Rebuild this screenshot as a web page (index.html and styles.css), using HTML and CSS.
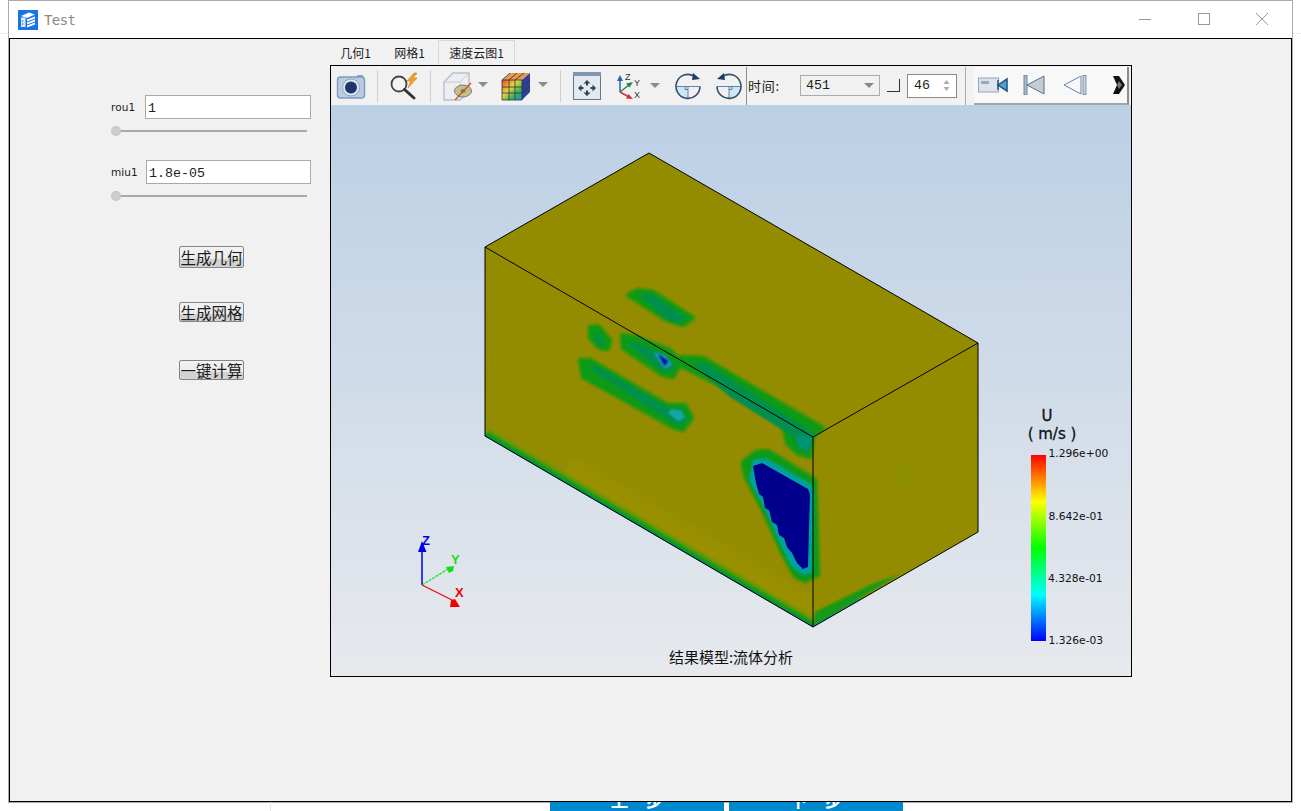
FILE: index.html
```html
<!DOCTYPE html>
<html lang="zh">
<head>
<meta charset="utf-8">
<title>Test</title>
<link rel="stylesheet" href="styles.css">
</head>
<body>
<div class="window">
  <header class="titlebar">
    <svg class="app-icon" viewBox="0 0 20 20"><rect width="20" height="20" fill="#1a73e8"/><path d="M3 6 L11 2.5 L17 4.5 L9 8Z" fill="#fff"/><path d="M3 7.5 H7.5 V17 H3Z" fill="#dfeafb"/><circle cx="4.6" cy="11" r=".8" fill="#1a73e8"/><circle cx="4.6" cy="14" r=".8" fill="#1a73e8"/><path d="M9 9.5 L17 6.5 V8.5 L9 11.5Z M9 12.5 L17 9.5 V11.5 L9 14.5Z M9 15.5 L17 12.5 V14.5 L9 17.5Z" fill="#fff"/></svg>
    <span class="app-title">Test</span>
    <div class="win-controls">
      <svg class="win-btn" viewBox="0 0 12 12"><path d="M0 6.5H12" stroke="#999" fill="none"/></svg>
      <svg class="win-btn" viewBox="0 0 12 12"><rect x=".5" y=".5" width="11" height="11" stroke="#999" fill="none"/></svg>
      <svg class="win-btn" viewBox="0 0 12 12"><path d="M0 0L12 12M12 0L0 12" stroke="#999" fill="none"/></svg>
    </div>
  </header>
  <main class="frame">
    <aside class="form">
      <div class="field">
        <label class="field-label">rou1</label>
        <input class="field-input" value="1">
      </div>
      <div class="slider"><span class="slider-handle"></span><span class="slider-track"></span></div>
      <div class="field field-second">
        <label class="field-label field-label-wide">miu1</label>
        <input class="field-input" value="1.8e-05">
      </div>
      <div class="slider"><span class="slider-handle"></span><span class="slider-track"></span></div>
      <div class="actions">
        <button class="action action-tall">生成几何</button>
        <button class="action">生成网格</button>
        <button class="action action-last">一键计算</button>
      </div>
    </aside>
    <section class="pane">
      <nav class="tabs">
        <span class="tab">几何1</span>
        <span class="tab">网格1</span>
        <span class="tab tab-active">速度云图1</span>
      </nav>
      <div class="viewer">
        <div class="toolbar">
          <svg class="tool w30" viewBox="0 0 30 30"><path d="M20 6l1.500-2h5l1 2z" fill="#8aa3c2"/><rect x="1.500" y="6" width="27" height="21" rx="3" fill="#b9cbe0" stroke="#7f9abb" stroke-width="1.400"/><circle cx="15" cy="16.500" r="8.500" fill="#dbe6f2" stroke="#8ea6c4"/><circle cx="15" cy="16.500" r="6" fill="#1c3768"/></svg>
          <span class="sep"></span>
          <svg class="tool w30 tool-lens" viewBox="0 0 30 30"><path d="M24 2l-7 8h4l-3 7 9-10h-4l4-5z" fill="#f0a12a" stroke="#c87c10" stroke-width=".6"/><circle cx="9" cy="13" r="7.500" fill="#f4f4f4" stroke="#444" stroke-width="1.800"/><path d="M14.500 18.500L24 27" stroke="#333" stroke-width="3" stroke-linecap="round"/></svg>
          <span class="sep"></span>
          <div class="tool-group">
            <svg class="tool w48" viewBox="0 0 48 30"><path d="M2 11L11 2H27V20L18 29H2Z" fill="#eceef1" stroke="#b4bfcc" stroke-width="1.400"/><path d="M2 11H18V29M18 11L27 2" fill="none" stroke="#c4ccd6"/><ellipse cx="21" cy="20" rx="8.500" ry="6" fill="#c9bf7c" stroke="#6f7f99"/><ellipse cx="21" cy="20" rx="2.500" ry="2" fill="#5d7ba8"/><path d="M13 29L29 12" stroke="#d2512a" stroke-width="1.300"/><path d="M36 11H46L41 16Z" fill="#8c8c8c"/></svg>
            <svg class="tool w48" viewBox="0 0 48 30"><path d="M1 9L9 2H29L21 9Z" fill="#e8964a"/><path d="M21 9L29 2V21L21 29Z" fill="#2c3f9a"/><rect x="1" y="9" width="20" height="20" fill="url(#rainbow)"/><path d="M1 9H21V29H1ZM8 9V29M14 9V29M1 16H21M1 22H21M21 16L29 9M21 22L29 15M9 2L1 9M16 2L8 9M23 2L14 9" fill="none" stroke="#2c3340" stroke-width=".8"/><path d="M37 11H47L42 16Z" fill="#8c8c8c"/><defs><linearGradient id="rainbow" x1="0" y1="0" x2="1" y2="1"><stop offset="0" stop-color="#e8452a"/><stop offset=".4" stop-color="#e8d43a"/><stop offset=".7" stop-color="#35b65a"/><stop offset="1" stop-color="#2a7bd0"/></linearGradient></defs></svg>
          </div>
          <span class="sep"></span>
          <div class="tool-group tool-group-wide">
            <svg class="tool w30 tool-fit" viewBox="0 0 30 30"><rect x="1.500" y="1.500" width="27" height="27" fill="#e4e9f0" stroke="#5f7896"/><rect x="1" y="1" width="28" height="4" fill="#7f95b0"/><path d="M15 9l-3.500 3.500h2.500v2h2v-2h2.500zM15 25l3.500-3.500h-2.500v-2h-2v2h-2.500zM6 17l3.500 3.500v-2.500h2v-2h-2v-2.500zM24 17l-3.500-3.500v2.500h-2v2h2v2.500z" fill="#2e4258"/></svg>
            <svg class="tool w45" viewBox="0 0 45 30"><path d="M4 21V8" stroke="#2a62b8" stroke-width="1.500"/><path d="M4 4L1 10H7Z" fill="#2a62b8"/><path d="M4 21L13 14" stroke="#1f8a4a" stroke-width="1.500"/><path d="M17 11L10 12.500L13.500 16.500Z" fill="#1f8a4a"/><path d="M4 21L13 26" stroke="#d23030" stroke-width="1.500"/><path d="M17 28L10 27.500L12.500 23Z" fill="#d23030"/><text class="axis-tiny" x="9" y="9">Z</text><text class="axis-tiny" x="18" y="15">Y</text><text class="axis-tiny" x="18" y="27">X</text><path d="M34 12H44L39 17Z" fill="#8c8c8c"/></svg>
            <svg class="tool w28" viewBox="0 0 28 30"><path d="M14 15.500H2A12 12 0 0 0 14 27.500Z" fill="#cfe6f6"/><path d="M2 15.500H26M14 15.500V27.500M11 15.500V18.500H14" stroke="#3c6a96" fill="none" stroke-width=".8"/><path d="M20 5A12 12 0 1 0 26 15.500" fill="none" stroke="#33506e" stroke-width="1.600"/><path d="M19 2L26 8L18 9Z" fill="#1e3d66"/></svg>
            <svg class="tool w28" viewBox="0 0 28 30"><path d="M14 15.500H26A12 12 0 0 1 14 27.500Z" fill="#cfe6f6"/><path d="M2 15.500H26M14 15.500V27.500M17 15.500V18.500H14" stroke="#3c6a96" fill="none" stroke-width=".8"/><path d="M8 5A12 12 0 1 1 2 15.500" fill="none" stroke="#33506e" stroke-width="1.600"/><path d="M9 2L2 8L10 9Z" fill="#1e3d66"/></svg>
          </div>
          <span class="handle"></span>
          <span class="time-label">时间:</span>
          <div class="combo"><span>451</span><svg class="combo-arrow" viewBox="0 0 10 5"><path d="M0 0H10L5 5Z" fill="#888"/></svg></div>
          <span class="check"></span>
          <div class="spin"><span>46</span><svg class="spin-arrows" viewBox="0 0 7 11"><path d="M3.500 0L6.500 4H.5ZM3.500 11L.5 7H6.500Z" fill="#aaa"/></svg></div>
          <span class="sep sep-player"></span>
          <div class="player">
            <svg class="tool w30" viewBox="0 0 30 16"><rect x=".5" y="1" width="20" height="14" fill="#dde3ea" stroke="#93a6ba"/><rect x="3" y="4" width="8" height="3" fill="#97a8ba"/><path d="M20 8L29 2V14Z" fill="#46a8cc" stroke="#23507e" stroke-width="1.500"/><path d="M20 3V13" stroke="#23507e" stroke-width="1.500"/></svg>
            <svg class="tool w22" viewBox="0 0 22 20"><rect x="1" y="0" width="3" height="20" fill="#aebccc" stroke="#55708f" stroke-width=".8"/><path d="M21 1V19L4 10Z" fill="#c4ccd6" stroke="#55708f"/></svg>
            <svg class="tool w24" viewBox="0 0 24 20"><path d="M18 1V19L1 10Z" fill="#f6f7f9" stroke="#6a84a2"/><rect x="20" y="0.500" width="3" height="19" fill="#c6d0dc" stroke="#6a84a2" stroke-width=".8"/></svg>
            <svg class="tool w12" viewBox="0 0 12 18"><path d="M0 0H6L12 9L6 18H0L4 9Z" fill="#111"/><path d="M4 9L6 5L9 9L6 13Z" fill="#777"/></svg>
          </div>
        </div>
        <div class="canvas">
          <svg class="scene" viewBox="331 105 800 571" xmlns="http://www.w3.org/2000/svg">
            <defs>
              <filter id="blur1" x="-20%" y="-20%" width="140%" height="140%"><feGaussianBlur stdDeviation="1"/></filter>
              <filter id="blur2" x="-20%" y="-20%" width="140%" height="140%"><feGaussianBlur stdDeviation="1.600"/></filter>
              <filter id="blur6" x="-30%" y="-30%" width="160%" height="160%"><feGaussianBlur stdDeviation="5"/></filter>
              <clipPath id="clip-box"><path d="M649 153L978 343V532L813 627L485 436V247Z"/></clipPath>
              <clipPath id="clip-left"><path d="M485 247L813 437V627L485 436Z"/></clipPath>
              <clipPath id="clip-right"><path d="M813 437L978 343V532L813 627Z"/></clipPath>
              <linearGradient id="legend" x1="0" y1="0" x2="0" y2="1">
                <stop offset="0" stop-color="#f00"/><stop offset=".25" stop-color="#ff0"/><stop offset=".5" stop-color="#0f0"/><stop offset=".75" stop-color="#0ff"/><stop offset="1" stop-color="#00f"/>
              </linearGradient>
            </defs>
            <path d="M649 153L978 343V532L813 627L485 436V247Z" fill="#948c00"/>
            <g clip-path="url(#clip-left)">
              <path d="M560 480L813 627" stroke="#9a9000" stroke-width="50" fill="none" filter="url(#blur6)"/>
              <path d="M485 436L813 627" stroke="#5c9a08" stroke-width="16" fill="none" filter="url(#blur2)"/>
              <path d="M485 436L813 627" stroke="#0b9a18" stroke-width="9" fill="none" filter="url(#blur1)"/>
              <path d="M485 436L813 627" stroke="#008a70" stroke-width="3" fill="none"/>
            </g>
            <g clip-path="url(#clip-right)">
              <path d="M813 627L900 574L872 584L815 612Z" fill="#179a14" filter="url(#blur1)"/>
              <path d="M813 627L860 600" stroke="#00907a" stroke-width="3" filter="url(#blur1)"/>
              <ellipse cx="905" cy="476" rx="9" ry="12" fill="#8d8f02" filter="url(#blur2)"/>
            </g>
            <g clip-path="url(#clip-box)">
              <g fill="#0e9a12" stroke="#0e9a12" stroke-width="4" stroke-linejoin="round" filter="url(#blur2)">
                <path d="M628 295L638 290L653 292L693 318L683 325L667 320Z"/>
                <path d="M590 327L598 326L610 340L608 349L600 348L590 338Z"/>
                <path d="M622 335L636 337L670 350L681 363L673 377L663 375L623 348Z"/>
                <path d="M580 360L590 360L667 405L685 405L692 418L683 430L673 427L583 377Z"/>
                <path d="M680 357L703 358L823 428L813 436L810 457L797 453L787 443L783 423L730 390L683 367Z"/>
                <path d="M756 452L768 451L815 480L818 575L805 581L795 576L782 552L763 510L745 475L743 462Z"/>
              </g>
              <g fill="#008f50" stroke="#008f50" stroke-width="2" stroke-linejoin="round" filter="url(#blur1)">
                <path d="M642 295L652 296L685 318L678 322L665 317Z"/>
                <path d="M597 333L603 342L600 345L596 340Z"/>
                <path d="M629 343L640 345L668 358L674 366L668 371L662 370Z"/>
                <path d="M590 367L596 367L670 410L682 410L686 418L680 424L673 422Z"/>
                <path d="M695 364L705 364L812 433L808 450L800 448L794 436L730 396Z"/>
              </g>
              <g filter="url(#blur1)">
                <path d="M653 352L665 355L672 364L665 369Z" fill="#1f9ac8"/>
                <path d="M672 409L682 411L685 418L678 421L668 413Z" fill="#15a6a8"/>
                <path d="M796 436L812 437L808 451L798 446Z" fill="#00957a"/>
                <path d="M753 460L766 458L811 484L814 492L812 573L802 575L791 566L779 542L766 512L749 480Z" fill="#06a0a0"/>
              </g>
              <path d="M658 354L668 361L665 366Z" fill="#00008c" filter="url(#blur1)"/>
              <path d="M753 466L762 463L808 489L810 494L808 567L803 569L797 563L792 553L787 547L784 538L779 535L777 525L772 522L769 510L765 508L763 497L759 494L756 483Z" fill="#00008c"/>
            </g>
            <path d="M649 153L978 343V532L813 627L485 436V247ZM485 247L813 437L978 343M813 437V627" fill="none" stroke="#000" stroke-width="1"/>

            <path d="M422 585V548" stroke="#0000f0" stroke-width="1.500"/>
            <path d="M422 541L418 552H426.500Z" fill="#0000f0"/>
            <path d="M422 585L448 569" stroke="#12e012" stroke-width="1.200" stroke-dasharray="3 1"/>
            <path d="M454 566L446 567L449 573L453 571Z" fill="#12e012"/>
            <path d="M422 585L452 600" stroke="#f00000" stroke-width="1.200"/>
            <path d="M460 607L450 607L451 600L455 599Z" fill="#f00000"/>
            <text class="axis-label axis-z" x="422" y="545">Z</text>
            <text class="axis-label axis-y" x="451" y="564">Y</text>
            <text class="axis-label axis-x" x="455" y="597">X</text>

            <text class="legend-title" x="1047" y="421">U</text>
            <text class="legend-title" x="1052" y="439">( m/s )</text>
            <rect x="1031" y="455" width="15" height="186" fill="url(#legend)"/>
            <text class="legend-value" x="1048.500" y="456.500">1.296e+00</text>
            <text class="legend-value" x="1048.500" y="519.500">8.642e-01</text>
            <text class="legend-value" x="1048" y="581.500">4.328e-01</text>
            <text class="legend-value" x="1048.500" y="643.500">1.326e-03</text>
            <text class="caption" x="731" y="663">结果模型:流体分析</text>
          </svg>
        </div>
      </div>
    </section>
  </main>
</div>
<footer class="strip">
  <span class="strip-rule"></span>
  <button class="step"><span>上一步</span></button>
  <button class="step"><span>下一步</span></button>
</footer>
</body>
</html>
```
FILE: styles.css
```css
* { box-sizing: border-box; }
html, body { margin: 0; height: 811px; overflow: hidden; }
body {
  width: 1301px;
  background: linear-gradient(#fff 33px, #eee 33px, #eee 34px, #fff 34px);
  font-family: "Noto Sans CJK SC", "Liberation Sans", sans-serif;
  color: #1c1c1c;
}
.window {
  margin-left: 8px;
  width: 1285px;
  height: 803px;
  border: 1px solid #ababab;
  background: #fff;
  display: flex;
  flex-direction: column;
}
.titlebar {
  height: 37px;
  flex: none;
  display: flex;
  align-items: center;
  padding-left: 9px;
}
.app-icon { width: 20px; height: 20px; margin-top: 1px; }
.app-title {
  margin-left: 6px;
  font: 14px "DejaVu Sans Mono", monospace;
  letter-spacing: -.6px;
  color: #8a8a8a;
  margin-top: 1px;
}
.win-controls {
  margin-left: auto;
  margin-right: 24px;
  display: flex;
  gap: 46.500px;
  margin-top: -1px;
}
.win-btn { width: 12px; height: 12px; }
.frame {
  flex: 1;
  border: 1px solid #000;
  background: #f1f1f1;
  display: flex;
}
.form {
  width: 320px;
  flex: none;
  padding: 56px 0 0 101px;
}
.field { display: flex; align-items: center; height: 24px; }
.field-second { margin-top: 24px; }
.field-label {
  width: 34px;
  font: 10.500px "DejaVu Sans", sans-serif;
  letter-spacing: .1px;
}
.field-label-wide { width: 35px; }
.field-input {
  flex: none;
  height: 24px;
  margin: 0;
  padding: 3px 2px 1px;
  width: 166px;
  border: 1px solid #a9a9a9;
  border-radius: 0;
  background: #fff;
  outline: none;
  font: 13.300px "Liberation Mono", monospace;
  color: #1c1c1c;
}
.field-second .field-input { width: 165px; }
.slider {
  display: flex;
  align-items: center;
  width: 196px;
  height: 10px;
  margin-top: 7px;
}
.slider-handle {
  width: 10px;
  height: 10px;
  flex: none;
  border-radius: 50%;
  background: #cdcdcd;
  border: 1px dotted #bbb;
}
.slider-track { flex: 1; height: 2px; background: #a9a9a9; }
.actions {
  display: flex;
  flex-direction: column;
  align-items: flex-start;
  margin: 45px 0 0 68px;
  gap: 34px;
}
.action {
  width: 65px;
  height: 20px;
  padding: 0;
  margin: 0;
  border: 1px solid #858585;
  border-radius: 2px;
  background: linear-gradient(#f2f2f2 0, #ececec 60%, #d2d2d2 60%, #d2d2d2 100%);
  font: 15.500px/18px "Noto Sans CJK SC", sans-serif;
  color: #1c1c1c;
  white-space: nowrap;
  overflow: hidden;
}
.action-tall { height: 22px; }
.action-last { margin-top: 4px; }
.pane { width: 802px; flex: none; padding-top: 1px; display: flex; flex-direction: column; }
.tabs { height: 25px; flex: none; display: flex; align-items: flex-end; }
.tab {
  font-size: 12px;
  line-height: 24px;
  height: 24px;
  width: 54px;
  padding-right: 13px;
  text-align: right;
  white-space: nowrap;
}
.tab-active {
  height: 25px;
  width: 77px;
  padding: 0;
  text-align: center;
  background: #f1f1f1;
  border: 1px solid #d8d8d8;
  border-bottom: none;
}
.viewer {
  width: 802px;
  height: 612px;
  border: 1px solid #000;
  display: flex;
  flex-direction: column;
}
.toolbar {
  height: 39px;
  flex: none;
  display: flex;
  align-items: center;
  padding-left: 5px;
  background: #f1f1f1;
}
.tool { flex: none; display: block; height: 30px; }
.w12 { width: 12px; height: 18px; }
.w22 { width: 22px; height: 20px; }
.w24 { width: 24px; height: 20px; }
.w28 { width: 28px; }
.w30 { width: 30px; }
.w45 { width: 45px; }
.w48 { width: 48px; }
.sep { width: 1px; height: 32px; flex: none; margin: 0 11px; background: #cfcfcf; }
.tool-lens { margin-right: -1px; margin-left: 1px; }
.tool-group { display: flex; align-items: center; gap: 11px; }
.tool-group-wide { gap: 13px; }
.tool-fit { margin-right: 1px; }
.axis-tiny { font: 9px "Liberation Sans", sans-serif; fill: #333; }
.handle { width: 1px; height: 38px; flex: none; margin: 0 1px 0 3px; background: #8f8f8f; }
.time-label { width: 52px; flex: none; font-size: 13px; letter-spacing: .7px; white-space: nowrap; }
.combo {
  width: 80px;
  height: 21px;
  flex: none;
  display: flex;
  align-items: center;
  justify-content: space-between;
  padding: 0 5px;
  border: 1px solid #ababab;
  font: 13.300px "Liberation Mono", monospace;
}
.combo-arrow { width: 10px; height: 5px; }
.check {
  width: 13px;
  height: 13px;
  flex: none;
  margin: 0 7px;
  border-right: 1px solid #333;
  border-bottom: 1px solid #333;
}
.spin {
  width: 50px;
  height: 24px;
  flex: none;
  display: flex;
  align-items: center;
  justify-content: space-between;
  padding: 0 6px;
  border: 1px solid #8a8a8a;
  background: #fff;
  font: 13.300px "Liberation Mono", monospace;
}
.spin-arrows { width: 7px; height: 11px; }
.sep-player { height: 38px; margin: 0 8px; background: #aaa; }
.player {
  width: 155px;
  height: 38px;
  flex: none;
  display: flex;
  align-items: center;
  padding-left: 4px;
  gap: 15px;
  background: #f8f8f8;
  border-right: 2px solid #8c8c8c;
  border-bottom: 2px solid #a4a4a4;
}
.player .w24 { margin-left: 3px; }
.player .w12 { margin-left: 11px; }
.canvas {
  flex: 1;
  background: linear-gradient(#bbcfe5, #e7e9ed);
}
.scene { display: block; width: 800px; height: 571px; }
.axis-label { font: bold 13px "Liberation Sans", sans-serif; }
.axis-z { fill: #0000f0; }
.axis-y { fill: #12e012; }
.axis-x { fill: #f00000; }
.legend-title {
  font: 15px "DejaVu Sans", sans-serif;
  fill: #111;
  stroke: #111;
  stroke-width: .3px;
  text-anchor: middle;
}
.legend-value { font: 10.700px "DejaVu Sans", sans-serif; fill: #111; }
.caption { font-size: 15px; fill: #111; text-anchor: middle; }
.strip {
  position: relative;
  height: 9px;
  margin-top: -1px;
  display: flex;
  overflow: hidden;
  padding-left: 270px;
}
.strip-rule { width: 1px; height: 9px; flex: none; margin-right: 279px; background: #e2e2e2; }
.step {
  width: 174px;
  height: 9px;
  margin: 0 5px 0 0;
  padding: 0;
  border: none;
  flex: none;
  background: #0088cc;
  color: #fff;
  overflow: hidden;
  display: block;
}
.step span {
  display: block;
  margin-top: -14px;
  font: bold 17.500px/20px "Noto Sans CJK SC", sans-serif;
}
```
